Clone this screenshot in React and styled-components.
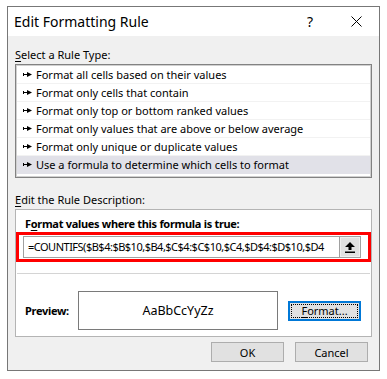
import React from "react";
import styled, { createGlobalStyle } from "styled-components";

const Global = createGlobalStyle`
  body {
    margin: 0;
    background: #ffffff;
    font-family: "Noto Sans", "Open Sans", sans-serif;
    font-size: 11px;
    color: #000;
  }
`;

const Dialog = styled.div`
  margin: 6px 0 0 7px;
  width: 373px;
  height: 365px;
  box-sizing: border-box;
  border: 1px solid #777777;
  background: #f0f0f0;
  display: flex;
  flex-direction: column;
`;

const TitleBar = styled.div`
  height: 29px;
  background: #ffffff;
  display: flex;
  align-items: center;
  padding-left: 6px;
`;

const Title = styled.div`
  flex: 1;
  font-size: 14px;
  padding-bottom: 1px;
`;

const TitleButton = styled.div`
  width: ${(p) => p.w}px;
  height: 29px;
  display: flex;
  align-items: center;
  justify-content: center;
  font-size: 14px;
`;

const Body = styled.div`
  padding: 0 7px;
  display: flex;
  flex-direction: column;
`;

const Label = styled.div`
  height: 16px;
  line-height: 16px;
  margin-top: ${(p) => p.top}px;
  margin-bottom: ${(p) => p.bottom}px;
  padding-left: ${(p) => p.left || 0}px;
  font-weight: ${(p) => (p.bold ? 700 : 400)};
  letter-spacing: ${(p) => (p.bold ? "-0.3px" : "0")};
`;

const U = styled.span`
  text-decoration: underline;
  text-underline-offset: 2px;
`;

const List = styled.div`
  height: 114px;
  box-sizing: border-box;
  border: 1px solid #828282;
  padding: 1px;
  background: #ffffff;
  display: flex;
  flex-direction: column;
  box-shadow: inset 0 0 0 1px #d0d0d0;
`;

const Item = styled.div`
  height: 18px;
  box-sizing: border-box;
  display: flex;
  align-items: center;
  padding-left: 6px;
  gap: 4px;
  border-bottom: 1px solid ${(p) => (p.last ? "transparent" : "#f2f2f2")};
  background: ${(p) => (p.selected ? "#e1e1e8" : "#ffffff")};
  white-space: nowrap;
`;

const Group = styled.div`
  height: 128px;
  box-sizing: border-box;
  border: 1px solid #b4b4b4;
  background: #ffffff;
  display: flex;
  flex-direction: column;
`;

const RedBox = styled.div`
  height: 30px;
  box-sizing: border-box;
  border: 3px solid #ff0000;
  padding: 1px 7px 1px 4px;
`;

const Input = styled.div`
  height: 22px;
  box-sizing: border-box;
  border: 1px solid #a0a0a0;
  display: flex;
  background: #ffffff;
`;

const InputText = styled.div`
  flex: 1;
  overflow: hidden;
  white-space: nowrap;
  line-height: 20px;
  padding-left: 4px;
  font-size: 11px;
  letter-spacing: -0.5px;
`;

const CollapseButton = styled.div`
  width: 20px;
  border-left: 1px solid #a0a0a0;
  background: #e1e1e1;
  display: flex;
  align-items: center;
  justify-content: center;
  box-shadow: inset 0 0 0 1px #f0f0f0;
`;

const Separator = styled.div`
  margin: 11px 1px 0;
  height: 1px;
  background: #d4d4d4;
`;

const PreviewRow = styled.div`
  display: flex;
  align-items: center;
  margin-top: 17px;
  padding-left: 9px;
`;

const PreviewLabel = styled.div`
  width: 53px;
  font-weight: 700;
  letter-spacing: -0.3px;
`;

const PreviewBox = styled.div`
  width: 200px;
  height: 39px;
  box-sizing: border-box;
  border: 1px solid #7a7a7a;
  display: flex;
  align-items: center;
  justify-content: center;
  font-size: 12.5px;
`;

const Button = styled.div`
  width: 73px;
  height: 20px;
  box-sizing: border-box;
  border: ${(p) => (p.focused ? "2px solid #0078d7" : "1px solid #adadad")};
  background: #e1e1e1;
  display: flex;
  align-items: center;
  justify-content: center;
  margin-left: ${(p) => p.left || 0}px;
`;

const FocusRing = styled.div`
  align-self: stretch;
  flex: 1;
  margin: 1px;
  border: 1px dotted #000;
  display: flex;
  align-items: center;
  justify-content: center;
`;

const Footer = styled.div`
  display: flex;
  justify-content: flex-end;
  padding-right: 4px;
  margin-top: 5px;
`;

const Arrow = () => (
  <svg width="9" height="5" viewBox="0 0 9 5">
    <rect x="0" y="1" width="1" height="3" fill="#000" />
    <rect x="0" y="2" width="5" height="1" fill="#000" />
    <polygon points="4,0 9,2.5 4,5" fill="#000" />
  </svg>
);

const UpIcon = () => (
  <svg width="10" height="11" viewBox="0 0 10 11">
    <polygon points="5,0 10,5 6.5,5 6.5,8 3.5,8 3.5,5 0,5" fill="#000" />
    <rect x="0" y="9.5" width="10" height="1.5" fill="#000" />
  </svg>
);

const rules = [
  "Format all cells based on their values",
  "Format only cells that contain",
  "Format only top or bottom ranked values",
  "Format only values that are above or below average",
  "Format only unique or duplicate values",
  "Use a formula to determine which cells to format",
];

export default function App() {
  return (
    <>
      <Global />
      <Dialog>
        <TitleBar>
          <Title>Edit Formatting Rule</Title>
          <TitleButton w={46}>?</TitleButton>
          <TitleButton w={46}>
            <svg width="11" height="11" viewBox="0 0 11 11">
              <path d="M0.5 0.5 L10.5 10.5 M10.5 0.5 L0.5 10.5" stroke="#000" strokeWidth="1" />
            </svg>
          </TitleButton>
        </TitleBar>
        <Body>
          <Label top={11} bottom={1}>
            <U>S</U>elect a Rule Type:
          </Label>
          <List>
            {rules.map((r, i) => (
              <Item key={r} selected={i === rules.length - 1} last={i === rules.length - 1}>
                <Arrow />
                {r}
              </Item>
            ))}
          </List>
          <Label top={14} bottom={1}>
            <U>E</U>dit the Rule Description:
          </Label>
          <Group>
            <Label top={6} bottom={0} left={9} bold>
              F<U>o</U>rmat values where this formula is true:
            </Label>
            <RedBox>
              <Input>
                <InputText>=COUNTIFS($B$4:$B$10,$B4,$C$4:$C$10,$C4,$D$4:$D$10,$D4</InputText>
                <CollapseButton>
                  <UpIcon />
                </CollapseButton>
              </Input>
            </RedBox>
            <Separator />
            <PreviewRow>
              <PreviewLabel>Preview:</PreviewLabel>
              <PreviewBox>AaBbCcYyZz</PreviewBox>
              <Button focused left={10}>
                <FocusRing>
                  <U>F</U>ormat...
                </FocusRing>
              </Button>
            </PreviewRow>
          </Group>
          <Footer>
            <Button>OK</Button>
            <Button left={11}>Cancel</Button>
          </Footer>
        </Body>
      </Dialog>
    </>
  );
}
